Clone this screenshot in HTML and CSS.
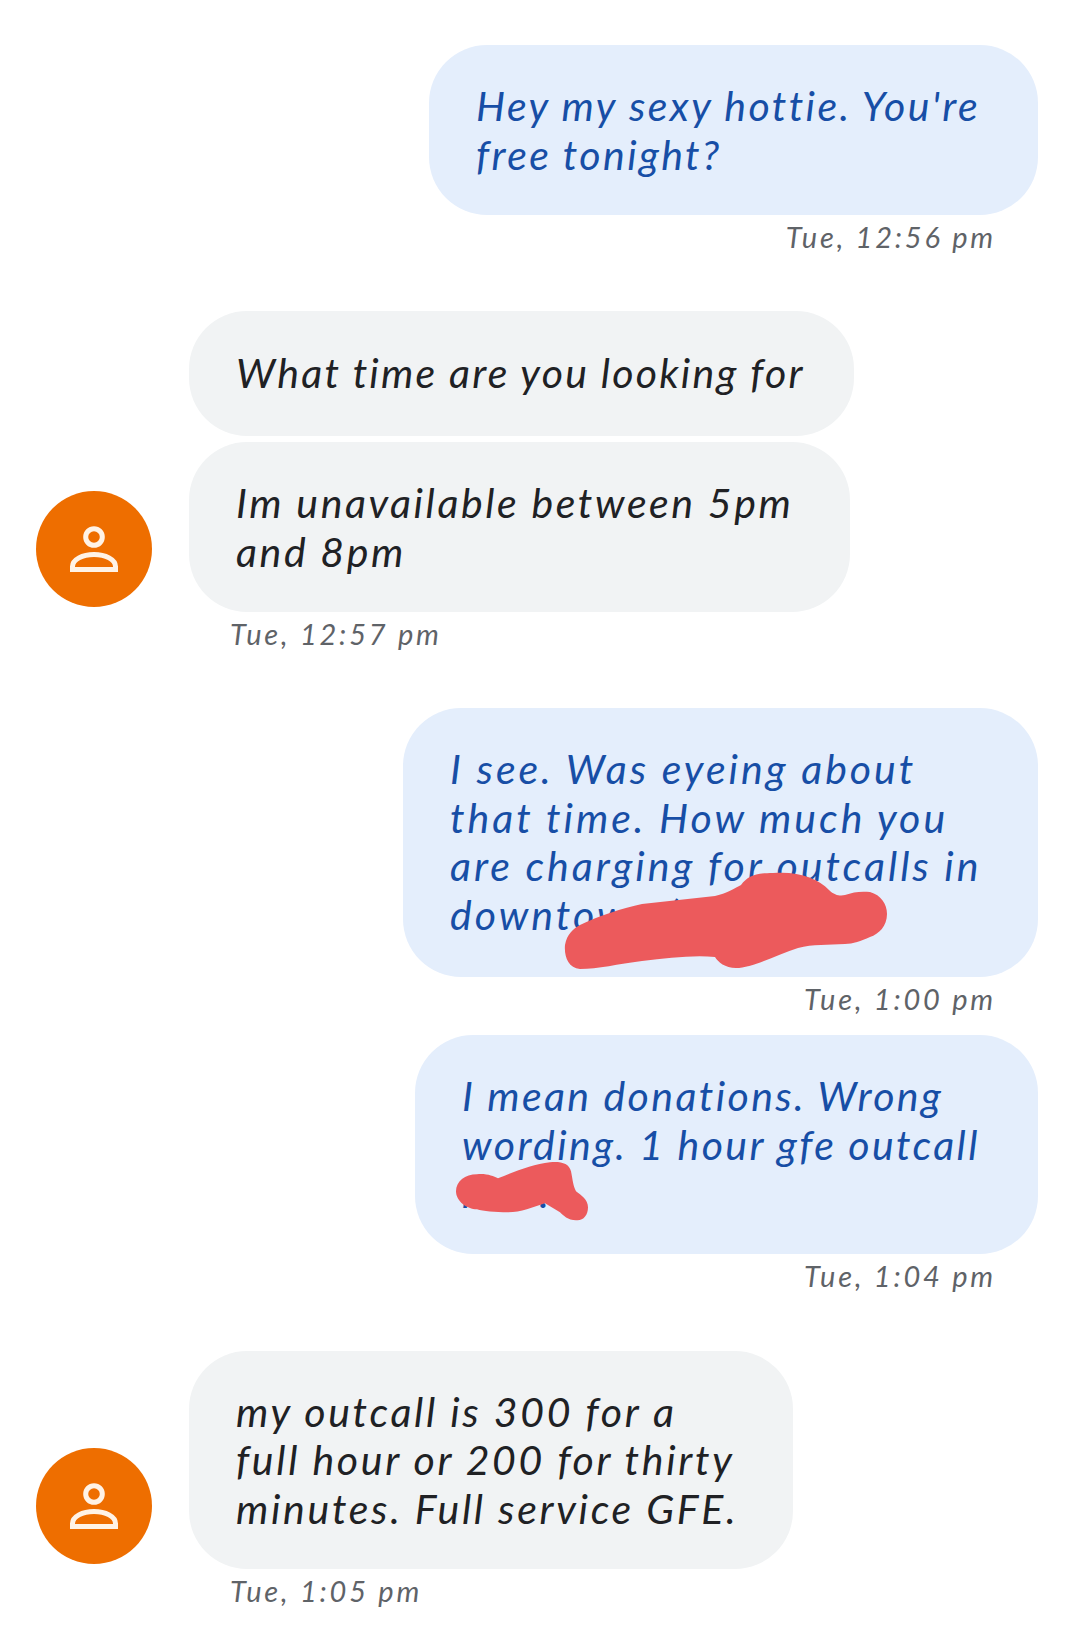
FILE: index.html
```html
<!DOCTYPE html>
<html lang="en">
<head>
<meta charset="utf-8">
<title>Messages</title>
<link rel="stylesheet" href="styles.css">
</head>
<body>
<main class="thread">
  <section class="out g1">
    <div class="bubble mine w609 ls24">Hey my sexy hottie. You're<br>free tonight?</div>
    <div class="ts">Tue, 12:56 pm</div>
  </section>

  <section class="in g2">
    <div class="row">
      <div class="avatar"><svg viewBox="0 0 116 116" class="person"><circle cx="58" cy="46" r="8.300"/><path d="M36.500 78.500v-3c0-7 10-12 21.500-12s21.500 5 21.500 12v3z"/></svg></div>
      <div class="stack">
        <div class="bubble theirs w665 ls22 single">What time are you looking for</div>
        <div class="bubble theirs w661 ls26">Im unavailable between 5pm<br>and 8pm</div>
      </div>
    </div>
    <div class="ts">Tue, 12:57 pm</div>
  </section>

  <section class="out g3">
    <div class="bubble mine w635 ls30 tall">I see. Was eyeing about<br>that time. How much you<br>are charging for outcalls in<br>downtown (
      <svg class="ink" viewBox="0 0 635 269"><path d="M177 261C165 260 161 248 162 237C164 226 170 221 177 217C195 208 220 200 239 196L312 188C325 185 332 180 338 177C345 168 352 165 370 165C395 163 415 170 426 182C432 188 438 188 442 187C450 184 458 183 467 184C478 187 484 196 484 206C484 218 476 226 467 229C458 233 450 236 442 236C425 237 410 236 395 240C375 246 350 260 333 260C322 260 315 254 312 249C290 247 265 250 239 253C215 256 195 261 177 261Z"/></svg></div>
    <div class="ts">Tue, 1:00 pm</div>
  </section>

  <section class="out g4">
    <div class="bubble mine w623 ls24">I mean donations. Wrong<br>wording. 1 hour gfe outcall<br>rate.
      <svg class="ink" viewBox="0 0 623 218"><path d="M41 156C41 146 50 139 62 139C72 138 78 141 83 143C100 136 118 129 135 127C146 126 154 128 156 136C158 146 158 150 161 156C166 160 173 164 173 172C173 180 168 186 161 185C153 185 148 180 145 177L130 168C118 172 106 177 93 177C80 177 68 176 62 174C52 174 41 166 41 156Z"/></svg></div>
    <div class="ts">Tue, 1:04 pm</div>
  </section>

  <section class="in g5">
    <div class="row">
      <div class="avatar"><svg viewBox="0 0 116 116" class="person"><circle cx="58" cy="46" r="8.300"/><path d="M36.500 78.500v-3c0-7 10-12 21.500-12s21.500 5 21.500 12v3z"/></svg></div>
      <div class="stack">
        <div class="bubble theirs w604 ls27">my outcall is 300 for a<br>full hour or 200 for thirty<br>minutes. Full service GFE.</div>
      </div>
    </div>
    <div class="ts">Tue, 1:05 pm</div>
  </section>
</main>
</body>
</html>
```

FILE: styles.css
```css
* { box-sizing: border-box; }
html, body { margin: 0; padding: 0; background: #fff; }
body { width: 1080px; height: 1625px; overflow: hidden; font-family: "Lato", "Open Sans", sans-serif; font-style: italic; }
.thread { display: flex; flex-direction: column; padding-top: 45px; }
.out { display: flex; flex-direction: column; align-items: flex-end; padding-right: 42px; }
.in { display: flex; flex-direction: column; padding-left: 36px; }
.g2 { margin-top: 50px; }
.g3 { margin-top: 50px; }
.g4 { margin-top: 12px; }
.g5 { margin-top: 51px; }
.row { display: flex; align-items: flex-end; gap: 37px; }
.stack { display: flex; flex-direction: column; gap: 6px; }
.bubble { position: relative; padding: 37px 0 36px 47px; border-radius: 58px; font-size: 41px; line-height: 48.500px; white-space: nowrap; }
.single { min-height: 125px; padding-top: 38px; }
.tall { min-height: 269px; }
.ls22 { letter-spacing: 2.200px; }
.ls24 { letter-spacing: 2.400px; }
.ls26 { letter-spacing: 2.600px; }
.ls27 { letter-spacing: 2.700px; }
.ls30 { letter-spacing: 3px; }
.mine { background: #e4eefc; color: #174ea6; }
.theirs { background: #f1f3f4; color: #202124; }
.w609 { width: 609px; }
.w635 { width: 635px; }
.w623 { width: 623px; }
.w665 { width: 665px; }
.w661 { width: 661px; }
.w604 { width: 604px; }
.ts { height: 46px; line-height: 44px; font-size: 29px; letter-spacing: 2.800px; color: #5f6368; padding-right: 42px; }
.in .ts { padding: 0 0 0 194px; }
.avatar { flex: none; width: 116px; height: 116px; margin-bottom: 5px; border-radius: 50%; background: #ee6e00; }
.person { display: block; width: 116px; height: 116px; fill: none; stroke: #fff3e6; stroke-width: 5; }
.ink { position: absolute; left: 0; top: 0; width: 100%; height: 100%; fill: #ec5a5c; }
```
